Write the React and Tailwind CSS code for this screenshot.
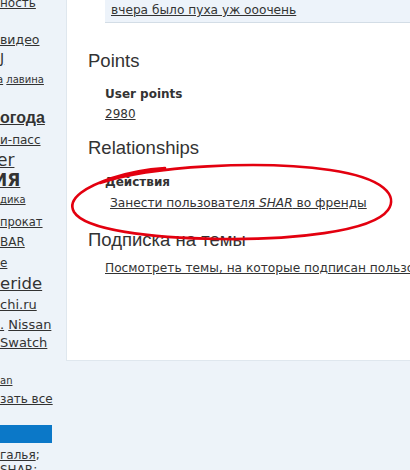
import React from "react";

const V = { fontFamily: '"DejaVu Sans", Verdana, sans-serif' };
const A = { fontFamily: '"Liberation Sans", Arial, sans-serif' };

function SideRow({ children, cls, style }) {
  return <div className={"whitespace-nowrap text-[#333] " + cls} style={style}>{children}</div>;
}

export default function App() {
  return (
    <div className="w-[410px] h-[470px] overflow-hidden bg-[#edf3f9] flex relative" style={V}>
      {/* left sidebar (clipped tag cloud) */}
      <div className="w-[66px] shrink-0 flex flex-col overflow-hidden">
        <SideRow cls="mt-[-5px] h-[16px] leading-[16px] text-[12px]"><span className="underline">ность</span></SideRow>
        <SideRow cls="mt-[21px] h-[16px] leading-[16px] text-[12.5px]"><span className="underline">видео</span></SideRow>
        <SideRow cls="mt-[1px] h-[18px] leading-[18px] text-[14px]"><span className="underline">J</span></SideRow>
        <SideRow cls="mt-[6px] h-[14px] leading-[14px] text-[10px] -ml-[3px]"><span className="underline">а</span> <span className="underline">лавина</span></SideRow>
        <SideRow cls="mt-[20px] h-[22px] leading-[22px] text-[16px] font-bold" style={A}><span className="underline">огода</span></SideRow>
        <SideRow cls="mt-[3px] h-[16px] leading-[16px] text-[12px]"><span className="underline">и-пасс</span></SideRow>
        <SideRow cls="mt-[1px] h-[22px] leading-[22px] text-[17px] -ml-[3px]"><span className="underline">er</span></SideRow>
        <SideRow cls="mt-[-2px] h-[22px] leading-[22px] text-[17px] font-bold -ml-[7px]"><span className="underline">ИЯ</span></SideRow>
        <SideRow cls="mt-[2px] h-[14px] leading-[14px] text-[10px]"><span className="underline">дика</span></SideRow>
        <SideRow cls="mt-[7px] h-[16px] leading-[16px] text-[11.5px]"><span className="underline">прокат</span></SideRow>
        <SideRow cls="mt-[4px] h-[16px] leading-[16px] text-[12px]"><span className="underline">BAR</span></SideRow>
        <SideRow cls="mt-[5px] h-[16px] leading-[16px] text-[12px]"><span className="underline">e</span></SideRow>
        <SideRow cls="mt-[2px] h-[22px] leading-[22px] text-[16.5px]"><span className="underline">eride</span></SideRow>
        <SideRow cls="mt-[2px] h-[16px] leading-[16px] text-[13px]"><span className="underline">chi.ru</span></SideRow>
        <SideRow cls="mt-[4px] h-[16px] leading-[16px] text-[13px]"><span className="underline">.</span> <span className="underline">Nissan</span></SideRow>
        <SideRow cls="mt-[2px] h-[16px] leading-[16px] text-[13px]"><span className="underline">Swatch</span></SideRow>
        <SideRow cls="mt-[23px] h-[14px] leading-[14px] text-[10px]"><span className="underline">an</span></SideRow>
        <SideRow cls="mt-[3px] h-[16px] leading-[16px] text-[12px]"><span className="underline">зать все</span></SideRow>
        <div className="mt-[18px] h-[18px] w-[52px] bg-[#0b78c8] shrink-0" />
        <SideRow cls="mt-[4px] h-[16px] leading-[16px] text-[12px]"><span className="underline">галья</span>;</SideRow>
        <SideRow cls="mt-[-1px] h-[16px] leading-[16px] text-[12px]"><span className="underline">SHAR</span>;</SideRow>
      </div>

      {/* main */}
      <div className="flex-1 flex flex-col min-w-0">
        <div className="h-[361px] bg-white border-l border-b border-[#dfe7ee] overflow-hidden flex flex-col">
          <div className="ml-[38px] h-[23px] bg-[#edf3fa] border-b border-[#d3dde6] shrink-0">
            <div className="pl-[6px] pt-[2px] text-[12.2px] leading-[16px] text-[#333] whitespace-nowrap">
              <span className="underline">вчера было пуха уж ооочень</span>
            </div>
          </div>

          <div className="ml-[21px] mt-[27px] text-[18.5px] leading-[22px] text-[#333]" style={A}>Points</div>
          <div className="ml-[38px] mt-[14px] text-[12px] leading-[16px] font-bold text-[#333]">User points</div>
          <div className="ml-[38px] mt-[4px] text-[12px] leading-[16px] text-[#333]"><span className="underline">2980</span></div>

          <div className="ml-[21px] mt-[15px] text-[18.5px] leading-[22px] text-[#333]" style={A}>Relationships</div>
          <div className="ml-[38px] mt-[15px] text-[12px] leading-[16px] font-bold text-[#333]">Действия</div>
          <div className="ml-[43px] mt-[5px] text-[12.2px] leading-[16px] text-[#333] whitespace-nowrap">
            <span className="underline">Занести пользователя <i>SHAR</i> во френды</span>
          </div>

          <div className="ml-[21px] mt-[18px] text-[18.5px] leading-[22px] text-[#333]" style={A}>Подписка на темы</div>
          <div className="ml-[38px] mt-[9px] text-[12.2px] leading-[16px] text-[#333] whitespace-nowrap">
            <span className="underline">Посмотреть темы, на которые подписан пользователь SHAR</span>
          </div>
        </div>
      </div>

      {/* red hand-drawn ellipse overlay */}
      <svg className="absolute left-0 top-0 pointer-events-none" width="410" height="470" viewBox="0 0 410 470">
        <g fill="none" stroke="#e3000f" strokeWidth="2.6" strokeLinecap="round">
          <path d="M 100 183 C 150 166, 260 160, 330 170 C 385 178, 398 196, 388 210 C 372 232, 290 240, 220 239 C 150 238, 85 230, 74 212 C 66 198, 88 186, 112 178 C 130 172, 150 169, 165 168" />
        </g>
      </svg>
    </div>
  );
}
